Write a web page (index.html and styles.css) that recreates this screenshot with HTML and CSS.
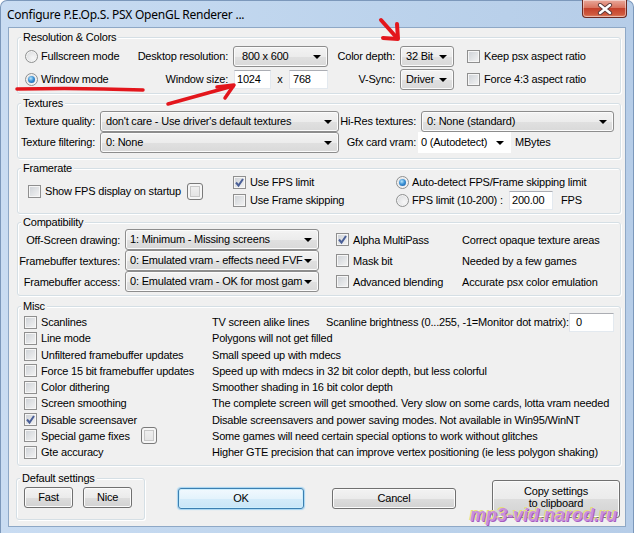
FILE: index.html
```html
<!DOCTYPE html>
<html lang="en">
<head>
    <meta charset="UTF-8">
    <title>Configure P.E.Op.S. PSX OpenGL Renderer</title>
    <link rel="stylesheet" href="styles.css">
</head>
<body>
    <div class="window">
        <div class="titlebar">
            <span class="title">Configure P.E.Op.S. PSX OpenGL Renderer ...</span>
            <div class="close">
                <svg width="16" height="12" viewBox="0 0 16 12">
                    <path d="M3 2 L13 10 M13 2 L3 10" stroke="#5a3a3a" stroke-width="4.2" stroke-linecap="round"/>
                    <path d="M3 2 L13 10 M13 2 L3 10" stroke="#fff" stroke-width="2.4" stroke-linecap="round"/>
                </svg>
            </div>
        </div>

        <div class="client">
            <!-- Resolution & Colors -->
            <div class="group g-res">
                <div class="caption">Resolution &amp; Colors</div>
                <div class="res-grid">
                    <div class="opt"><span class="radio"></span>Fullscreen mode</div>
                    <span class="lbl">Desktop resolution:</span>
                    <div class="combo desk">800 x 600</div>
                    <span class="lbl">Color depth:</span>
                    <div class="combo small">32 Bit</div>
                    <div class="opt indent"><span class="check"></span>Keep psx aspect ratio</div>

                    <div class="opt"><span class="radio on"></span>Window mode</div>
                    <span class="lbl">Window size:</span>
                    <div class="size">
                        <span class="edit w1">1024</span>
                        <span class="times">x</span>
                        <span class="edit w2">768</span>
                    </div>
                    <span class="lbl">V-Sync:</span>
                    <div class="combo small">Driver</div>
                    <div class="opt indent"><span class="check"></span>Force 4:3 aspect ratio</div>
                </div>
            </div>

            <!-- Textures -->
            <div class="group g-tex">
                <div class="caption">Textures</div>
                <div class="tex-grid">
                    <span class="lbl">Texture quality:</span>
                    <div class="combo wide">don't care - Use driver's default textures</div>
                    <span class="lbl">Hi-Res textures:</span>
                    <div class="combo hires">0: None (standard)</div>

                    <span class="lbl">Texture filtering:</span>
                    <div class="combo wide">0: None</div>
                    <span class="lbl">Gfx card vram:</span>
                    <div class="vram">
                        <div class="combo flat">0 (Autodetect)</div>
                        <span class="unit">MBytes</span>
                    </div>
                </div>
            </div>

            <!-- Framerate -->
            <div class="group g-fps">
                <div class="caption">Framerate</div>
                <div class="fps">
                    <div class="fps-a">
                        <span class="check"></span>Show FPS display on startup
                        <span class="mini"></span>
                    </div>
                    <div class="fps-b">
                        <div class="opt"><span class="check on"><svg viewBox="0 0 11 11"><path d="M2 5.5 L4.5 8.5 L9 2" fill="none" stroke="#4a5f97" stroke-width="2"/></svg></span>Use FPS limit</div>
                        <div class="opt"><span class="check"></span>Use Frame skipping</div>
                    </div>
                    <div class="fps-c">
                        <div class="opt"><span class="radio on"></span>Auto-detect FPS/Frame skipping limit</div>
                        <div class="opt"><span class="radio"></span><span class="fps-lbl">FPS limit (10-200) :</span><span class="edit w3">200.00</span><span class="unit">FPS</span></div>
                    </div>
                </div>
            </div>

            <!-- Compatibility -->
            <div class="group g-comp">
                <div class="caption">Compatibility</div>
                <div class="comp-grid">
                    <span class="lbl">Off-Screen drawing:</span>
                    <div class="combo mid">1: Minimum - Missing screens</div>
                    <div class="opt"><span class="check on"><svg viewBox="0 0 11 11"><path d="M2 5.5 L4.5 8.5 L9 2" fill="none" stroke="#4a5f97" stroke-width="2"/></svg></span>Alpha MultiPass</div>
                    <span>Correct opaque texture areas</span>

                    <span class="lbl">Framebuffer textures:</span>
                    <div class="combo mid">0: Emulated vram - effects need FVF</div>
                    <div class="opt"><span class="check"></span>Mask bit</div>
                    <span>Needed by a few games</span>

                    <span class="lbl">Framebuffer access:</span>
                    <div class="combo mid">0: Emulated vram - OK for most gam</div>
                    <div class="opt"><span class="check"></span>Advanced blending</div>
                    <span>Accurate psx color emulation</span>
                </div>
            </div>

            <!-- Misc -->
            <div class="group g-misc">
                <div class="caption">Misc</div>
                <div class="misc-grid">
                    <div class="opt"><span class="check"></span>Scanlines</div>
                    <div class="desc">
                        <span class="desc-first">TV screen alike lines</span>
                        <span>Scanline brightness (0...255, -1=Monitor dot matrix):</span>
                        <span class="edit w4">0</span>
                    </div>
                    <div class="opt"><span class="check"></span>Line mode</div>
                    <span>Polygons will not get filled</span>
                    <div class="opt"><span class="check"></span>Unfiltered framebuffer updates</div>
                    <span>Small speed up with mdecs</span>
                    <div class="opt"><span class="check"></span>Force 15 bit framebuffer updates</div>
                    <span>Speed up with mdecs in 32 bit color depth, but less colorful</span>
                    <div class="opt"><span class="check"></span>Color dithering</div>
                    <span>Smoother shading in 16 bit color depth</span>
                    <div class="opt"><span class="check"></span>Screen smoothing</div>
                    <span>The complete screen will get smoothed. Very slow on some cards, lotta vram needed</span>
                    <div class="opt"><span class="check on"><svg viewBox="0 0 11 11"><path d="M2 5.5 L4.5 8.5 L9 2" fill="none" stroke="#4a5f97" stroke-width="2"/></svg></span>Disable screensaver</div>
                    <span>Disable screensavers and power saving modes. Not available in Win95/WinNT</span>
                    <div class="opt"><span class="check"></span>Special game fixes<span class="mini fix"></span></div>
                    <span>Some games will need certain special options to work without glitches</span>
                    <div class="opt"><span class="check"></span>Gte accuracy</div>
                    <span>Higher GTE precision that can improve vertex positioning (ie less polygon shaking)</span>
                </div>
            </div>

            <!-- bottom row -->
            <div class="bottom">
                <div class="group g-def">
                    <div class="caption">Default settings</div>
                    <div class="def-btns">
                        <div class="btn">Fast</div>
                        <div class="btn">Nice</div>
                    </div>
                </div>
                <div class="btn default ok">OK</div>
                <div class="btn cancel">Cancel</div>
                <div class="btn copy">Copy settings<br>to clipboard</div>
            </div>
        </div>

        <div class="watermark">mp3-vid.narod.ru</div>

        <svg class="marks" width="634" height="533" viewBox="0 0 634 533">
            <g fill="none" stroke="#e3161c" stroke-linecap="round" stroke-linejoin="round">
                <path d="M17 89 Q80 87.5 143 90" stroke-width="3.5"/>
                <path d="M168 104 Q200 95 233 86" stroke-width="3.5"/>
                <path d="M217 87 L234 85 L225 98" stroke-width="3.5"/>
                <path d="M381 20 L397 38" stroke-width="4"/>
                <path d="M397 24 L398 39 L383 38" stroke-width="4"/>
            </g>
        </svg>
    </div>
</body>
</html>
```

FILE: styles.css
```css
* {
    box-sizing: border-box;
}

body {
    margin: 0;
    width: 634px;
    height: 533px;
    overflow: hidden;
    background: #fff;
    font-family: "Liberation Sans", Arial, sans-serif;
    font-size: 11px;
    letter-spacing: -0.2px;
    color: #000;
}

.window {
    position: relative;
    width: 634px;
    height: 533px;
    padding: 0 8px 7px;
    display: flex;
    flex-direction: column;
    border-radius: 7px 7px 0 0;
    border: 1px solid #7c98bb;
    border-bottom: none;
    background: linear-gradient(to right, #c9dcf2, #bcd3ec 60%, #b6cde8);
}

.titlebar {
    height: 27px;
    display: flex;
    align-items: flex-start;
}

.title {
    margin: 6px 0 0 -2px;
    font-family: "Noto Sans", "Open Sans", sans-serif;
    font-size: 12px;
    letter-spacing: -0.25px;
    line-height: 16px;
}

.close {
    margin: -1px -2px 0 auto;
    width: 45px;
    height: 18px;
    display: flex;
    align-items: center;
    justify-content: center;
    border: 1px solid #6b2a22;
    border-top: none;
    border-radius: 0 0 4px 4px;
    background: linear-gradient(#e9a99b, #d9745f 45%, #c4412b 50%, #cf5a3e 85%, #e0886a);
    box-shadow: inset 0 0 0 1px rgba(255, 255, 255, 0.45);
}

.client {
    flex: 1;
    background: #f0f0f0;
    box-shadow: 0 0 0 1px #8ea8c6;
    display: flex;
    flex-direction: column;
}

/* group boxes */

.group {
    margin: 9px 0 0 8px;
    width: 604px;
    border: 1px solid #d5dfe5;
    border-radius: 3px;
    box-shadow: inset 1px 1px 0 #fff, 1px 1px 0 #fff;
    display: flex;
    flex-direction: column;
}

.caption {
    align-self: flex-start;
    margin: -7px 0 -6px 3px;
    padding: 0 2px;
    line-height: 13px;
    background: #f0f0f0;
}

.g-res { height: 57px; }
.g-tex { height: 56px; }
.g-fps { height: 46px; }
.g-comp { height: 74px; margin-top: 8px; }
.g-misc { height: 160px; margin-top: 10px; }

.lbl {
    justify-self: end;
    white-space: nowrap;
}

.opt {
    display: flex;
    align-items: center;
    white-space: nowrap;
}

/* controls */

.check {
    width: 13px;
    height: 13px;
    margin-right: 4px;
    flex: none;
    border: 1px solid #8f8f8f;
    background: linear-gradient(135deg, #cdd1d6, #f4f4f4);
    box-shadow: inset 0 0 0 1px #f6f6f6;
    display: inline-flex;
}

.check svg {
    width: 11px;
    height: 11px;
}

.radio {
    position: relative;
    width: 13px;
    height: 13px;
    margin-right: 3px;
    flex: none;
    border-radius: 50%;
    border: 1px solid #8f9191;
    background: radial-gradient(circle at 65% 65%, #f7f7f7, #d4d6d9);
    box-shadow: inset 0 0 0 1px #f4f4f4;
}

.radio.on::after {
    content: "";
    position: absolute;
    left: 2px;
    top: 2px;
    width: 7px;
    height: 7px;
    border-radius: 50%;
    background: radial-gradient(circle at 40% 35%, #b9e6fb, #3d93d6 45%, #14539b);
}

.combo {
    position: relative;
    height: 21px;
    padding: 0 18px 0 5px;
    line-height: 19px;
    white-space: nowrap;
    overflow: hidden;
    border: 1px solid #8d8d8d;
    border-radius: 3px;
    background: linear-gradient(#f3f3f3, #ececec 50%, #e0e0e0 51%, #d9d9d9);
    box-shadow: inset 0 0 0 1px #fbfbfb;
}

.combo::after {
    content: "";
    position: absolute;
    right: 6px;
    top: 8px;
    border-left: 4px solid transparent;
    border-right: 4px solid transparent;
    border-top: 4px solid #000;
}

.combo.flat {
    border-color: #fff;
    border-radius: 0;
    background: #fff;
    box-shadow: none;
    padding-left: 2px;
}

.edit {
    display: inline-block;
    height: 19px;
    padding-left: 3px;
    line-height: 17px;
    background: #fff;
    border: 1px solid;
    border-color: #abadb3 #e3e9ef #e3e9ef #e2e3ea;
}

.mini {
    display: inline-block;
    width: 16px;
    height: 17px;
    border: 1px solid #7a7a7a;
    border-radius: 3px;
    background: linear-gradient(#f2f2f2, #e2e2e2);
    box-shadow: inset 0 0 0 2px #f6f6f6, inset 0 0 0 3px #c8c8c8;
}

.btn {
    height: 21px;
    line-height: 19px;
    text-align: center;
    border: 1px solid #707070;
    border-radius: 3px;
    background: linear-gradient(#f3f3f3, #ebebeb 50%, #dddddd 51%, #d2d2d2);
    box-shadow: inset 0 0 0 1px #fbfbfb;
}

.btn.default {
    border-color: #3c7fb1;
    background: linear-gradient(#f1f9fe, #e4f3fc 50%, #d4ecfa 51%, #c9e5f7);
    box-shadow: inset 0 0 0 1px #cdeefd, 0 0 1px 1px #a6d5f2;
}

/* Resolution & Colors */

.res-grid {
    display: grid;
    grid-template-columns: 106px 97px 100px 67px 67px 1fr;
    grid-auto-rows: 22px;
    row-gap: 1px;
    align-items: center;
    padding: 7px 0 0 7px;
}

.combo.desk {
    margin-left: 5px;
    width: 95px;
    padding-left: 8px;
}

.combo.small {
    margin-left: 5px;
    width: 54px;
}

.indent {
    padding-left: 5px;
}

.size {
    display: flex;
    align-items: center;
    margin-left: 6px;
}

.edit.w1 { width: 37px; padding-left: 2px; }
.edit.w2 { width: 39px; }

.times {
    width: 18px;
    text-align: center;
}

/* Textures */

.tex-grid {
    display: grid;
    grid-template-columns: 77px 244px 77px 1fr;
    grid-auto-rows: 20px;
    row-gap: 1px;
    align-items: center;
    padding-top: 7px;
}

.combo.wide {
    margin-left: 5px;
    width: 239px;
}

.combo.hires {
    margin-left: 5px;
    width: 193px;
}

.vram {
    display: flex;
    align-items: center;
    margin-left: 2px;
}

.vram .combo {
    width: 93px;
}

.unit {
    margin-left: 4px;
}

/* Framerate */

.fps {
    display: flex;
    padding-top: 4px;
}

.fps-a {
    width: 215px;
    height: 36px;
    padding-left: 10px;
    display: flex;
    align-items: center;
    white-space: nowrap;
}

.fps-a .mini {
    margin-left: 6px;
}

.fps-b {
    width: 163px;
}

.fps-b .opt,
.fps-c .opt {
    height: 18px;
}

.fps-lbl {
    width: 97px;
}

.edit.w3 {
    width: 44px;
    padding-left: 2px;
}

.fps-c .unit {
    margin-left: 8px;
}

/* Compatibility */

.comp-grid {
    display: grid;
    grid-template-columns: 102px 199px 143px 1fr;
    grid-auto-rows: 21px;
    align-items: center;
    padding-top: 6px;
}

.combo.mid {
    margin-left: 5px;
    width: 194px;
    padding-left: 4px;
}

.comp-grid .opt {
    padding-left: 17px;
}

/* Misc */

.misc-grid {
    display: grid;
    grid-template-columns: 194px 1fr;
    grid-auto-rows: 16.25px;
    align-items: center;
    padding-top: 7px;
    white-space: nowrap;
}

.misc-grid .opt {
    padding-left: 6px;
}

.desc {
    display: flex;
    align-items: center;
}

.desc-first {
    width: 114px;
}

.edit.w4 {
    width: 45px;
    margin-left: auto;
    margin-right: 6px;
    padding-left: 6px;
}

.mini.fix {
    margin-left: 11px;
}

/* bottom row */

.bottom {
    display: flex;
    align-items: flex-start;
    margin-top: 12px;
}

.group.g-def {
    margin: 0 0 0 7px;
    width: 129px;
    height: 42px;
}

.def-btns {
    display: flex;
    gap: 10px;
    padding: 8px 0 0 7px;
}

.def-btns .btn {
    width: 49px;
}

.btn.ok {
    margin: 10px 0 0 33px;
    width: 126px;
}

.btn.cancel {
    margin: 10px 0 0 28px;
    width: 124px;
}

.btn.copy {
    margin: 2px 0 0 36px;
    width: 128px;
    height: 38px;
    padding-top: 4px;
    line-height: 12px;
}

/* overlays */

.watermark {
    position: absolute;
    left: 469px;
    top: 504px;
    font-family: "Liberation Sans", Arial, sans-serif;
    font-size: 18px;
    letter-spacing: 0;
    font-weight: bold;
    font-style: italic;
    color: #c88fdc;
    text-shadow: -1px -1px 0 #e4e07a, 1px 1px 0 #a55cc0;
    white-space: nowrap;
}

.marks {
    position: absolute;
    left: -1px;
    top: -1px;
    pointer-events: none;
}
```
